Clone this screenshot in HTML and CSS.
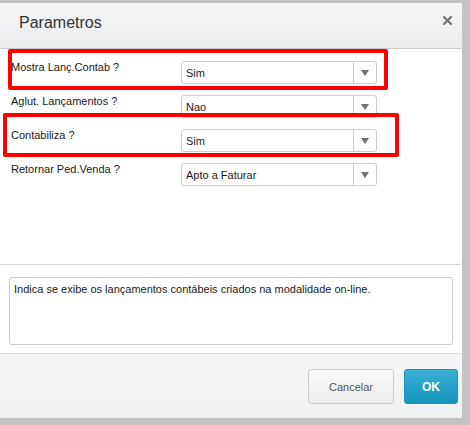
FILE: index.html
```html
<!DOCTYPE html>
<html lang="pt">
<head>
  <meta charset="UTF-8">
  <title>Parametros</title>
  <link rel="stylesheet" href="styles.css">
</head>
<body>

<div class="dialog">
  <div class="dialog-header">
    <span class="title">Parametros</span>
    <svg class="close" width="9" height="9" viewBox="0 0 9 9">
      <path d="M1 1 L8 8 M8 1 L1 8" stroke="#6b7079" stroke-width="2" stroke-linecap="square"/>
    </svg>
  </div>

  <div class="dialog-body">
    <div class="row">
      <label>Mostra Lanç.Contab ?</label>
      <div class="combo"><span class="value">Sim</span><span class="arrow"></span></div>
    </div>
    <div class="row">
      <label>Aglut. Lançamentos ?</label>
      <div class="combo"><span class="value">Nao</span><span class="arrow"></span></div>
    </div>
    <div class="row">
      <label>Contabiliza ?</label>
      <div class="combo"><span class="value">Sim</span><span class="arrow"></span></div>
    </div>
    <div class="row">
      <label>Retornar Ped.Venda ?</label>
      <div class="combo"><span class="value">Apto a Faturar</span><span class="arrow"></span></div>
    </div>
  </div>

  <div class="help">
    <div class="help-box">Indica se exibe os lançamentos contábeis criados na modalidade on-line.</div>
  </div>

  <div class="dialog-footer">
    <button class="btn btn-cancel">Cancelar</button>
    <button class="btn btn-ok">OK</button>
  </div>
</div>

<!-- marcações em vermelho -->
<div class="mark mark-1"></div>
<div class="mark mark-2"></div>

</body>
</html>
```

FILE: styles.css
```css
body {
  margin: 0;
  background-color: #c3c3c3;
  font-family: 'Liberation Sans', Arial, sans-serif;
  font-size: 11px;
  color: #1a1a1a;
}
.dialog {
  width: 462px;
  height: 415px;
  margin-top: 3px;
  background: #fff;
  display: flex;
  flex-direction: column;
}
.dialog-header {
  height: 35px;
  padding: 10px 10px 0 19px;
  display: flex;
  justify-content: space-between;
  align-items: flex-start;
  background: linear-gradient(#f4f5f6, #ebedee);
  border-bottom: 1px solid #c9cacb;
}
.title {
  font-size: 16px;
  line-height: 20px;
  color: #333;
}
.close {
  margin-top: 3px;
}
.dialog-body {
  height: 203px;
  padding-top: 12px;
  border-bottom: 1px solid #d4d4d4;
  border-bottom-right-radius: 3px;
}
.row {
  display: flex;
  height: 34px;
}
.row label {
  width: 170px;
  padding-left: 11px;
  line-height: 12px;
}
.combo {
  width: 196px;
  height: 23px;
  box-sizing: border-box;
  border: 1px solid #ccc;
  border-radius: 3px;
  display: flex;
  align-items: center;
  background: #fff;
}
.combo .value {
  flex: 1;
  padding-left: 4px;
}
.combo .arrow {
  width: 22px;
  height: 21px;
  border-left: 1px solid #ccc;
  display: flex;
  align-items: center;
  justify-content: center;
}
.combo .arrow::after {
  content: "";
  border-left: 4px solid transparent;
  border-right: 4px solid transparent;
  border-top: 6px solid #6b7079;
}
.help {
  padding: 12px 9px 8px 9px;
}
.help-box {
  height: 68px;
  box-sizing: border-box;
  border: 1px solid #ccc;
  border-radius: 3px;
  padding: 4px;
  line-height: 14px;
}
.dialog-footer {
  flex: 1;
  border-top: 1px solid #dcdcdc;
  background: linear-gradient(#f5f6f7, #eef0f1);
  display: flex;
  justify-content: flex-end;
  align-items: flex-start;
  gap: 10px;
  padding: 15px 4px 0 0;
}
.btn {
  height: 35px;
  border-radius: 3px;
  font-family: 'Liberation Sans', Arial, sans-serif;
  font-size: 11px;
  cursor: pointer;
}
.btn-cancel {
  width: 86px;
  border: 1px solid #ccc;
  background: linear-gradient(#fafafa, #ececec);
  color: #555;
}
.btn-ok {
  width: 54px;
  border: 1px solid #1b93ba;
  background: linear-gradient(#38aed2, #1596bf);
  color: #fff;
  font-weight: bold;
  font-size: 12px;
}
.mark {
  position: absolute;
  border: 4px solid #f00;
  border-radius: 2px;
  box-sizing: border-box;
}
.mark-1 {
  left: 8px;
  top: 49px;
  width: 380px;
  height: 41px;
}
.mark-2 {
  left: 3px;
  top: 113px;
  width: 396px;
  height: 44px;
}
```
